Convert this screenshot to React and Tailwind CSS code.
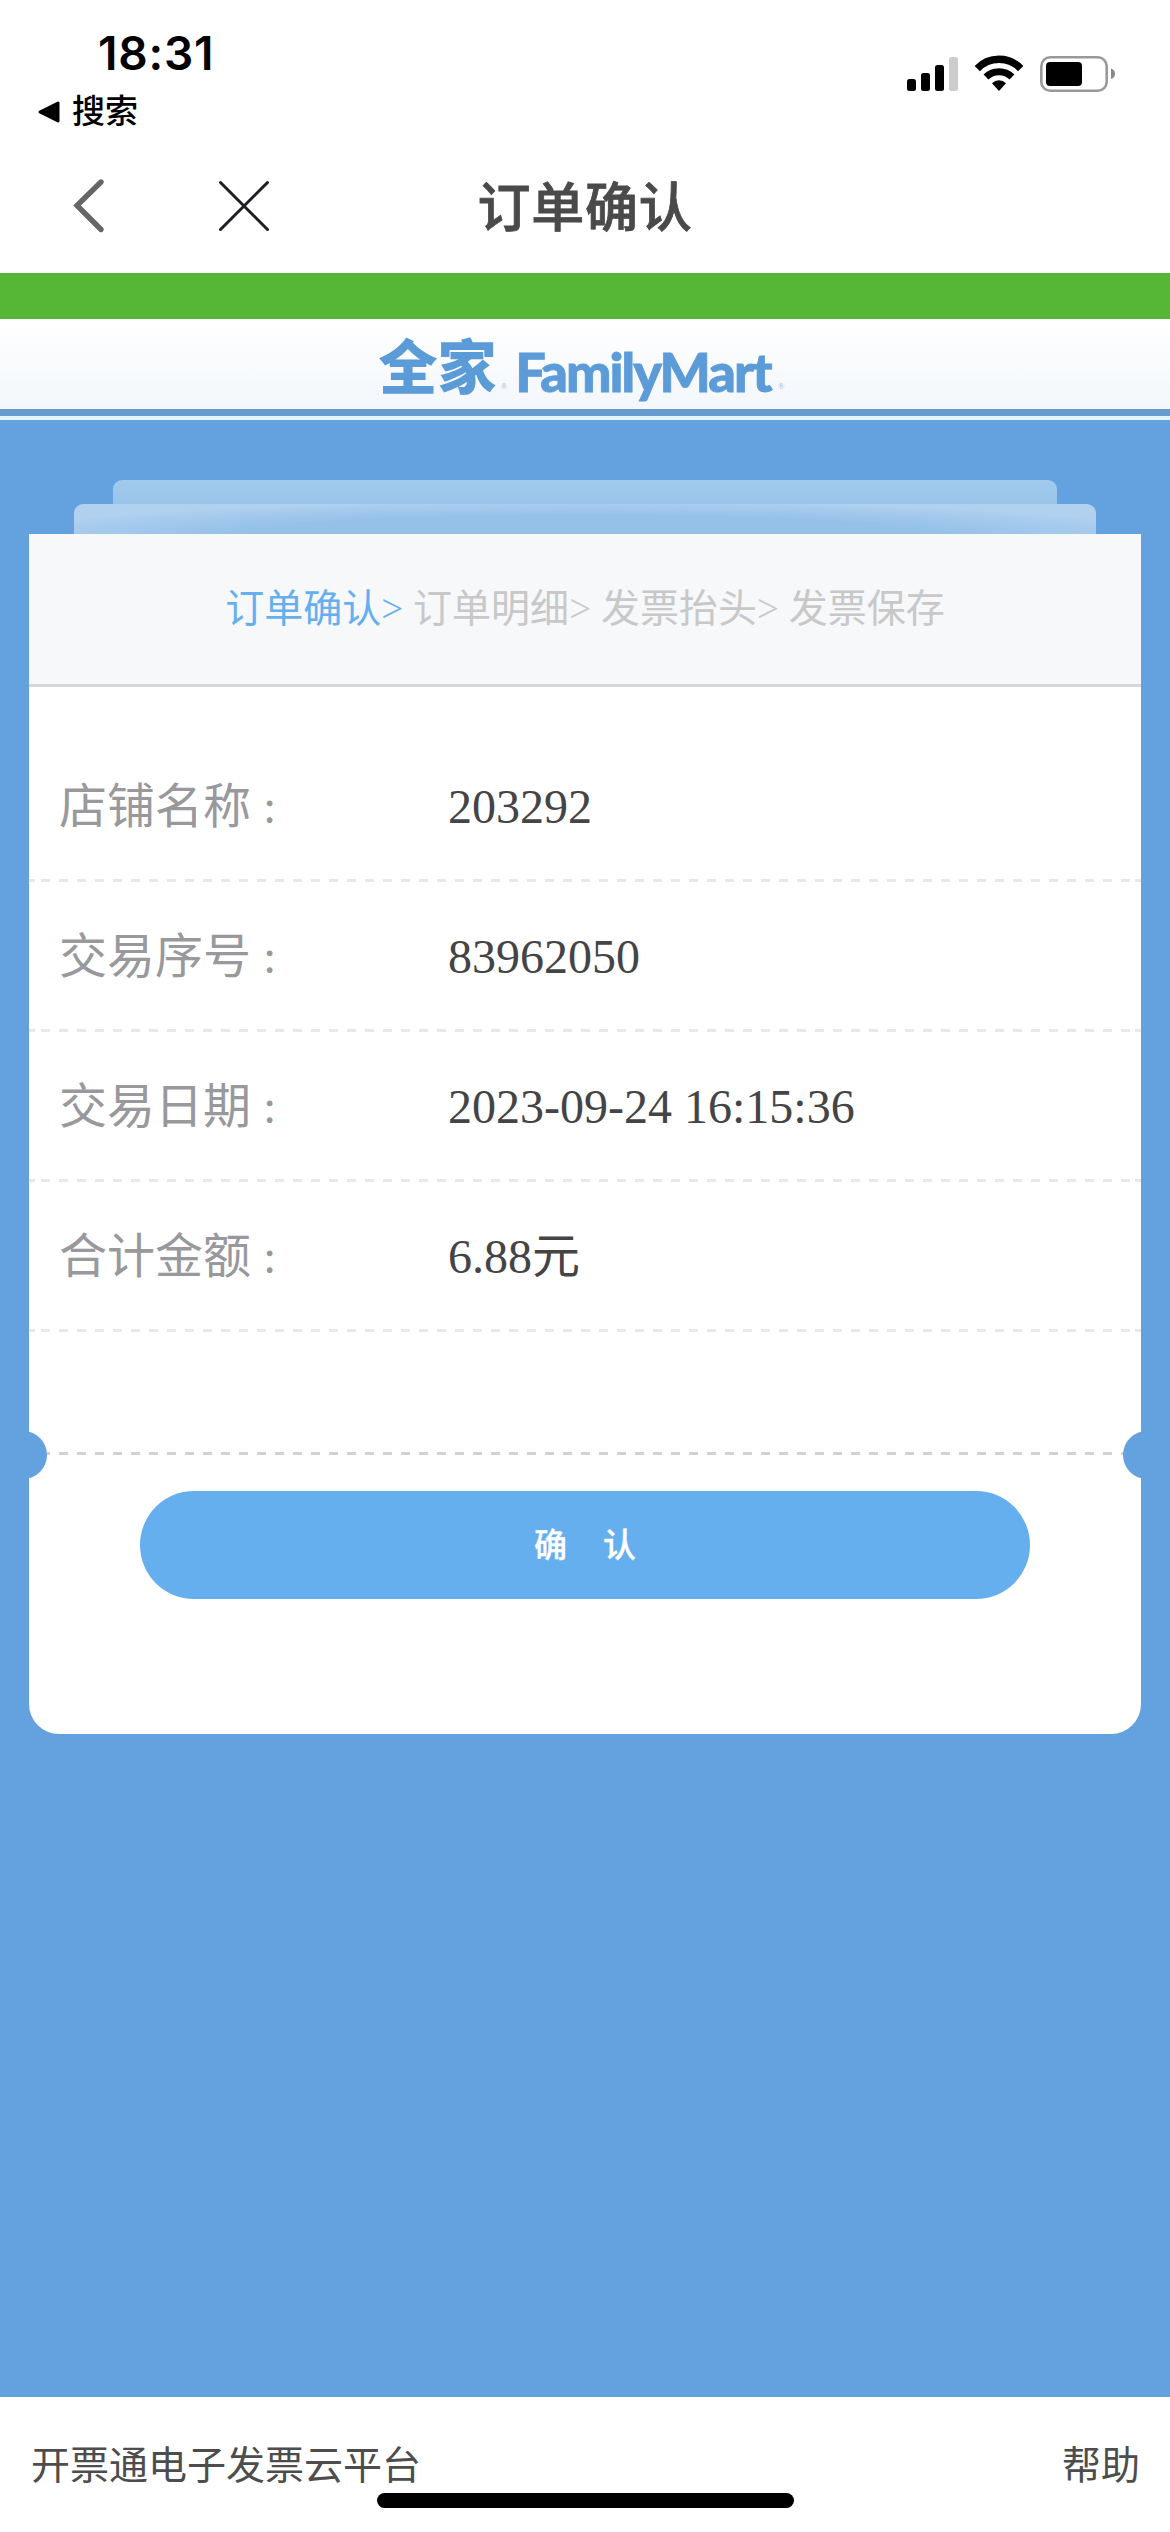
import React from 'react';

const steps = ['订单确认', '订单明细', '发票抬头', '发票保存'];

const details = [
    { label: '店铺名称', value: '203292' },
    { label: '交易序号', value: '83962050' },
    { label: '交易日期', value: '2023-09-24 16:15:36' },
    { label: '合计金额', value: '6.88元' },
];

const StatusIcons = () => (
    <svg width="210" height="40" viewBox="0 0 210 40" className="mt-[54px]">
        {/* signal */}
        <rect x="2" y="25" width="9" height="12" rx="2.5" />
        <rect x="16" y="19" width="9" height="18" rx="2.5" />
        <rect x="30" y="11" width="9" height="26" rx="2.5" />
        <rect x="44" y="3" width="9" height="34" rx="2.5" fill="#cccccc" />
        {/* wifi */}
        <path d="M72.3 14.6a30 30 0 0 1 43.4 0" fill="none" stroke="#000" strokeWidth="7.4" />
        <path d="M81 23a18.5 18.5 0 0 1 26 0" fill="none" stroke="#000" strokeWidth="7" />
        <path d="M87 29.2a9.8 9.8 0 0 1 14 0L94 37z" />
        {/* battery */}
        <rect x="136.3" y="3.3" width="65.4" height="33.4" rx="9" fill="none" stroke="#999" strokeWidth="2.6" />
        <rect x="141" y="8" width="36" height="24" rx="4" />
        <path d="M206 14.5q4 1.5 4 5.3t-4 5.3z" fill="#888" />
    </svg>
);

const StatusBar = () => (
    <div className="flex h-[143px] justify-between pl-[37px] pr-[55px]">
        <div>
            <div className="mt-[25px] pl-[61px] font-['Inter'] text-[46px] leading-[56px] font-semibold tracking-[0.8px] text-black">18:31</div>
            <div className="mt-[10px] flex items-center">
                <svg width="24" height="24" viewBox="0 0 24 24">
                    <path d="M3 12L21 3v18z" stroke="#000" strokeWidth="3" strokeLinejoin="round" />
                </svg>
                <span className="ml-[11px] pt-[1px] text-[33px] leading-[40px] font-medium text-black">搜索</span>
            </div>
        </div>
        <StatusIcons />
    </div>
);

const NavBar = () => (
    <div className="grid h-[130px] grid-cols-[1fr_auto_1fr] items-center pb-[4px]">
        <div className="flex items-center pl-[70px]">
            <svg width="38" height="60" viewBox="0 0 38 60">
                <path d="M31 6L7 29.5 31 53.5" fill="none" stroke="#666" strokeWidth="5.4" strokeLinecap="round" />
            </svg>
            <svg width="56" height="56" viewBox="0 0 56 56" className="ml-[108px]">
                <path d="M4.5 4.5L51.5 51.5M51.5 4.5L4.5 51.5" stroke="#1c2026" strokeWidth="3" strokeLinecap="round" />
            </svg>
        </div>
        <h1 className="pt-[5px] text-[53px] leading-[60px] font-medium tracking-[0.8px] text-[#4a4a4a] [-webkit-text-stroke:0.8px_#4a4a4a]">订单确认</h1>
        <div />
    </div>
);

const Banner = () => (
    <div>
        <div className="h-[46px] bg-[#55b735]" />
        <div className="flex h-[90px] justify-center bg-linear-to-b from-white to-[#f3f7fb] pr-[7px] text-[#5b9bd8]">
            <div className="flex items-baseline pt-[10px]">
                <span className="text-[59px] leading-[80px] font-black">全家</span>
                <span className="ml-[4px] text-[9px] text-[#9fb9d2]">®</span>
                <span className="ml-[8px] translate-y-[3px] font-['Lato'] text-[54px] leading-[80px] font-black tracking-[-2px] [-webkit-text-stroke:0.8px_#5b9bd8]">FamilyMart</span>
                <span className="ml-[7px] text-[9px] text-[#9fb9d2]">®</span>
            </div>
        </div>
        <div className="h-[7px] bg-[#669bd0]" />
        <div className="h-[4px] bg-[#e2f5fe]" />
    </div>
);

const DashedLine = ({ dark }) => (
    <div className={dark ? 'flex h-[3px] text-[#d2d2d2]' : 'flex h-[3px] text-[#e8e8e8]'}>
        <div className="w-[6px] bg-current" />
        <div className="mx-[5.5px] flex-1 bg-[repeating-linear-gradient(90deg,currentColor_0_9px,transparent_9px_18px)]" />
        <div className="w-[6px] bg-current" />
    </div>
);

const App = () => {
    return (
        <div className="flex h-[2532px] w-[1170px] flex-col overflow-hidden bg-white font-['Liberation_Serif','Noto_Sans_CJK_SC',serif]">
            <StatusBar />
            <NavBar />
            <Banner />

            <main className="flex-1 bg-[#63a1df] px-[29px] pt-[60px]">
                {/* stacked sheets behind the ticket */}
                <div className="mx-[84px] h-[24px] rounded-t-[9px] bg-linear-to-b from-[#a1caed] to-[#99c4ea]" />
                <div className="mx-[45px] h-[30px] rounded-t-[9px] bg-[radial-gradient(ellipse_58%_120%_at_50%_110%,#95c1e9_60%,#a7cbee_88%,#b1d1ef)]" />

                <div className="relative h-[1200px] rounded-b-[30px] bg-white">
                    <div className="flex h-[153px] items-center justify-center border-b-[3px] border-[#d7d7d7] bg-[#f6f8fa] text-[39px] text-[#c8c8c8]">
                        <p>
                            {steps.map((step, i) => (
                                <span key={step} className={i === 0 ? 'text-[#66afef]' : ''}>
                                    {step}{i < steps.length - 1 && '> '}
                                </span>
                            ))}
                        </p>
                    </div>

                    <div className="pt-[45px] text-[48px]">
                        {details.map((item) => (
                            <div key={item.label}>
                                <div className="flex h-[147px] items-center pt-[2px] pl-[30px]">
                                    <span className="w-[389px] text-[#98989d]">{item.label} :</span>
                                    <span className="text-[#444446]">{item.value}</span>
                                </div>
                                <DashedLine />
                            </div>
                        ))}
                    </div>

                    <div className="pt-[120px]">
                        <DashedLine dark />
                    </div>
                    {/* ticket notches */}
                    <div className="absolute top-[897px] left-[-30px] size-[48px] rounded-full bg-[#63a1df]" />
                    <div className="absolute top-[897px] right-[-30px] size-[48px] rounded-full bg-[#63a1df]" />

                    <button className="mx-auto mt-[36px] flex h-[108px] w-[890px] items-center justify-center gap-[36px] rounded-full bg-[#66afef] pt-[3px] text-[33px] font-medium text-white [-webkit-text-stroke:0.3px_white]">
                        <span>确</span>
                        <span>认</span>
                    </button>
                </div>
            </main>

            <footer className="relative flex h-[135px] justify-between pt-[39px] pr-[30px] pl-[31px] text-[39px] leading-[60px] text-[#4d4d4d]">
                <span>开票通电子发票云平台</span>
                <span>帮助</span>
                <div className="absolute bottom-[24px] left-[377px] h-[15px] w-[417px] rounded-full bg-black" />
            </footer>
        </div>
    );
};

export default App;
